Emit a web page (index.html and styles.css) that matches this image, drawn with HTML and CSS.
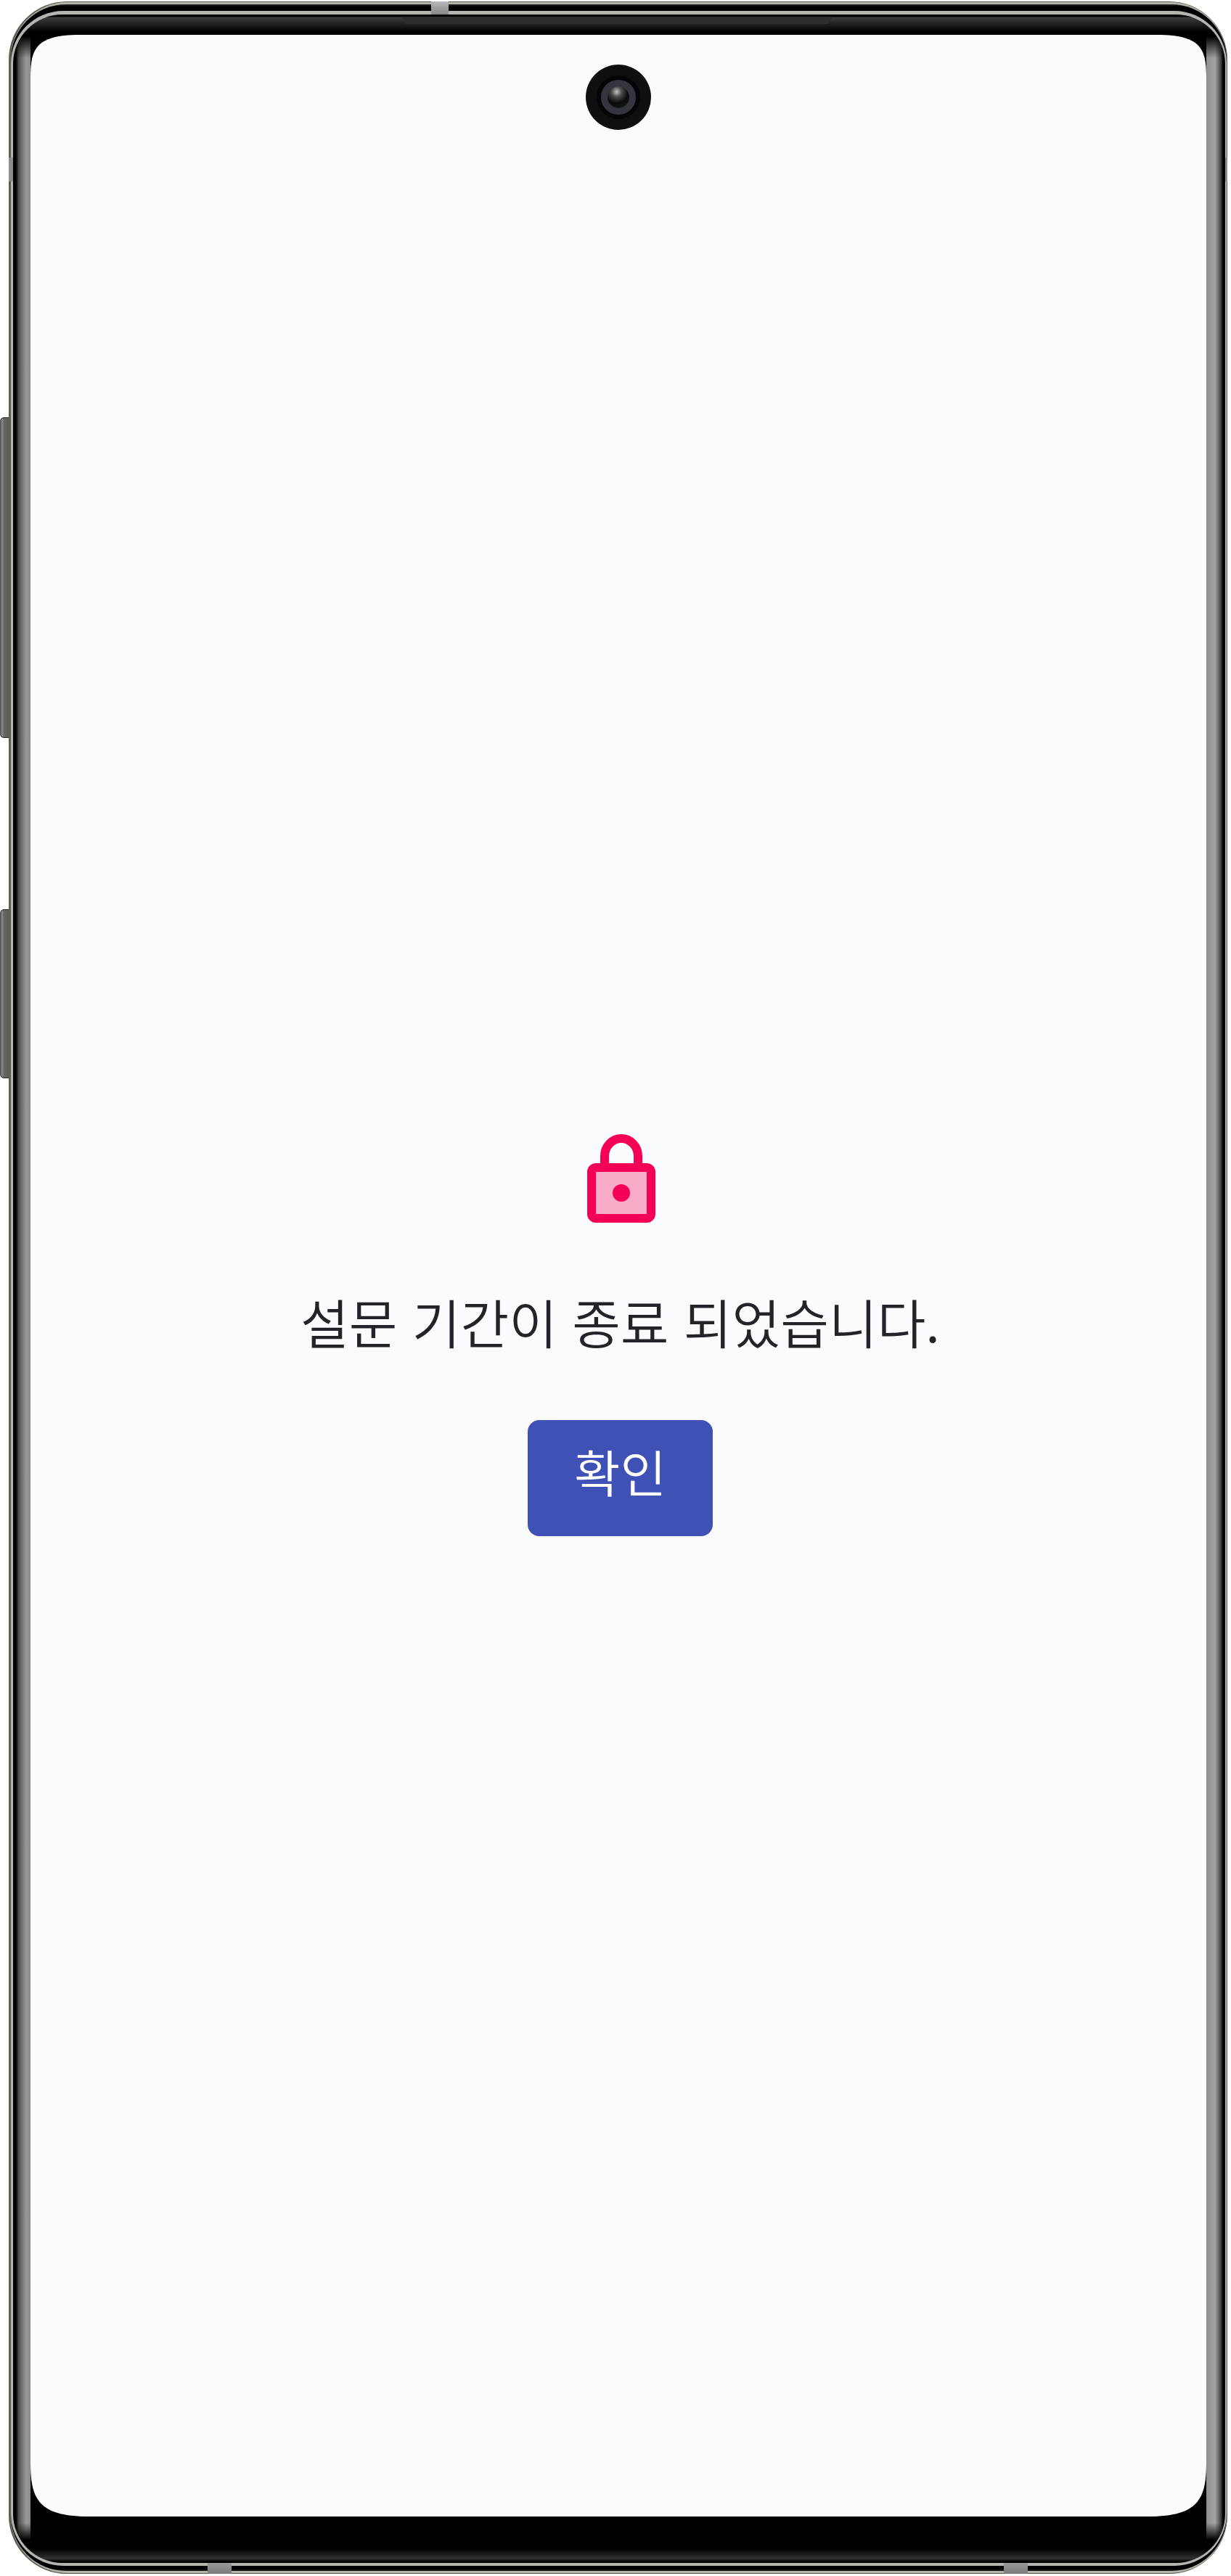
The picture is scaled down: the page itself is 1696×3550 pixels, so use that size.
FILE: index.html
```html
<!DOCTYPE html>
<html lang="ko">
<head>
    <meta charset="UTF-8">
    <meta name="viewport" content="width=device-width, initial-scale=1.0">
    <title>설문 종료</title>
    <link rel="stylesheet" href="styles.css">
</head>
<body>
    <div class="phone">
        <span class="key key-power"></span>
        <span class="key key-volume"></span>
        <span class="band band-left"></span>
        <span class="band band-right"></span>
        <span class="band band-top"></span>
        <span class="band band-bottom-left"></span>
        <span class="band band-bottom-right"></span>

        <div class="shell">
            <div class="rim">
                <div class="gap">
                    <div class="inner-rim">
                        <div class="bezel">
                            <span class="speaker"></span>
                            <div class="screen">
                                <div class="camera"><span class="lens"></span></div>

                                <svg class="lock-icon" width="94" height="122" viewBox="0 0 94 122">
                                    <path class="lock-shackle" d="M24 46V30a23 24 0 0 1 46 0V46"/>
                                    <rect class="lock-body" x="6" y="46" width="82" height="70" rx="6"/>
                                    <circle class="lock-dot" cx="47" cy="81" r="12"/>
                                </svg>

                                <p class="message">설문 기간이 종료 되었습니다.</p>
                                <button class="confirm-btn">확인</button>
                            </div>
                        </div>
                    </div>
                </div>
            </div>
        </div>
    </div>
</body>
</html>
```

FILE: styles.css
```css
html, body {
    margin: 0;
    padding: 0;
    background-color: #fff;
}
body {
    width: 1696px;
    height: 3550px;
    padding: 2px 5px 3px 12px;
    box-sizing: border-box;
    font-family: "Noto Sans CJK KR", "Noto Sans", sans-serif;
}
.phone {
    position: relative;
    height: 100%;
}

/* frame layers, outside in */
.shell, .rim, .gap, .inner-rim, .bezel, .screen {
    height: 100%;
    box-sizing: border-box;
}
.shell {
    padding: 1px 1px 1px 3px;
    border-radius: 80px;
    background-color: #5e5e56;
}
.rim {
    padding: 3px 0;
    border-radius: 78px;
    background-color: #b4b4a8;
}
.gap {
    padding: 9px 0 7px;
    border-radius: 76px;
    background: linear-gradient(to bottom, #2a2a2a 0, #000 3px, #000 calc(100% - 3px), #222 100%);
}
.inner-rim {
    padding: 5px 2px 4px 3px;
    border-radius: 72px;
    background-color: #b4b4b0;
}
.bezel {
    position: relative;
    padding: 28px 26px 64px 24px;
    border-radius: 68px;
    background:
        linear-gradient(to bottom, #000 0, #000 3px, #3c3c3c 4px, #000 24px, #000 30px, transparent 60px),
        linear-gradient(to top, #000 0, #000 2px, #333 6px, #000 19px, #000 32px, transparent 55px),
        linear-gradient(to right, #000 0, #000 4px, #555 8px, #989898 18px, #8c8c8c 24px, transparent 24px, transparent calc(100% - 26px), #8e8e8e calc(100% - 26px), #a4a4a4 calc(100% - 14px), #444 calc(100% - 6px), #000 calc(100% - 3px), #000 100%),
        #000;
}
.speaker {
    position: absolute;
    left: 535px;
    right: 541px;
    top: 3px;
    height: 10px;
    background-color: #2e2e2e;
    clip-path: polygon(0 0, 100% 0, 99% 100%, 1% 100%);
}
.screen {
    position: relative;
    padding-top: 1515px;
    display: flex;
    flex-direction: column;
    align-items: center;
    clip-path: path("M0 62C0 22 4 0 68 0H1552C1616 0 1620 22 1620 62V3345C1620 3395 1610 3420 1540 3420H80C10 3420 0 3395 0 3345Z");
    background-color: #f9fbfc;
    color: #212529;
}

/* hole punch sits over the screen */
.camera {
    position: absolute;
    left: 765px;
    top: 41px;
    width: 90px;
    height: 90px;
    display: flex;
    align-items: center;
    justify-content: center;
    border-radius: 50%;
    background-color: #0f0f12;
}
.camera::before {
    content: "";
    width: 60px;
    height: 60px;
    border-radius: 50%;
    background-color: #050507;
    position: absolute;
}
.lens {
    position: relative;
    width: 30px;
    height: 30px;
    border-radius: 50%;
    border: 9px solid #37343f;
    background: radial-gradient(circle at 42% 25%, #c4c4c4 0, #4a4a4a 25%, #0a0a0a 55%, #14241f 100%);
}

.lock-icon {
    margin-left: 8px;
    display: block;
    flex: none;
}
.lock-shackle {
    fill: none;
    stroke: #f50057;
    stroke-width: 12;
}
.lock-body {
    fill: #f8acc8;
    stroke: #f50057;
    stroke-width: 12;
}
.lock-dot {
    fill: #f50057;
}

.message {
    margin: 92px 0 0 5px;
    font-size: 72.5px;
    font-weight: 350;
    line-height: 88px;
    white-space: nowrap;
}
.confirm-btn {
    margin: 92px 0 0 5px;
    width: 255px;
    height: 160px;
    padding: 0 0 20px;
    border: 0;
    border-radius: 16px;
    background-color: #3f51b5;
    color: #fff;
    font-family: inherit;
    font-size: 69px;
    font-weight: 350;
}

/* hardware on the edge of the device */
.key {
    position: absolute;
    left: -12px;
    width: 12px;
    border-radius: 6px 0 0 6px;
    background: linear-gradient(to right, #4a4a4a, #8c8c8c 25%, #666 45%, #5c5c5c);
    box-shadow: inset 0 1px 0 #2a2a2a, inset 0 -1px 0 #2a2a2a;
}
.key-power {
    top: 573px;
    height: 442px;
}
.key-volume {
    top: 1251px;
    height: 233px;
}
.band {
    position: absolute;
    background-color: #8c8c8c;
}
.band-left, .band-right {
    top: 215px;
    width: 6px;
    height: 33px;
}
.band-left {
    left: 0;
}
.band-right {
    right: 0;
}
.band-top {
    left: 582px;
    top: 0;
    width: 24px;
    height: 19px;
    background: linear-gradient(to bottom, #b8b8b8, #848484);
}
.band-bottom-left, .band-bottom-right {
    bottom: 0;
    width: 33px;
    height: 18px;
    background: linear-gradient(to bottom, #a0a0a0, #7a7a7a);
}
.band-bottom-left {
    left: 274px;
}
.band-bottom-right {
    left: 1371px;
}
```
